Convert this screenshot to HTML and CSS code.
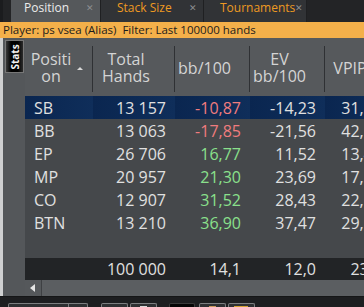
FILE: index.html
```html
<html>
	<head>
		<title>Position Stats</title>
		<link rel="stylesheet" href="styles.css">
	</head>
	<body>
		<div class="TabBar">
			<div class="Tab Active"><span class="TabLabel">Position</span><span class="TabClose">&#x2715;</span></div>
			<div class="Tab"><span class="TabLabel">Stack Size</span><span class="TabClose">&#x2715;</span></div>
			<div class="Tab"><span class="TabLabel">Tournaments</span><span class="TabClose">&#x2715;</span></div>
		</div>
		<div class="FilterBar">Player: ps vsea (Alias)&nbsp;&nbsp;Filter: Last 100000 hands</div>
		<div class="MainArea">
			<div class="SidePanel">
				<div class="SideTab"><span>Stats</span></div>
			</div>
			<div class="GridArea">
				<table class="StatGrid">
					<colgroup>
						<col class="ColPos">
						<col class="ColNum">
						<col class="ColStat">
						<col class="ColStat">
						<col class="ColLast">
					</colgroup>
					<thead>
						<tr>
							<th><div class="HeadCell"><div class="HeadText"><div>Positi</div><div>on</div></div><span class="SortArrow"></span></div></th>
							<th><div class="HeadCell"><div class="HeadText"><div>Total</div><div>Hands</div></div></div></th>
							<th><div class="HeadCell"><div class="HeadText"><div>bb/100</div></div></div></th>
							<th><div class="HeadCell"><div class="HeadText"><div>EV</div><div>bb/100</div></div></div></th>
							<th><div class="HeadCell Last"><div class="HeadText"><div>VPIP</div></div></div></th>
						</tr>
					</thead>
					<tbody>
						<tr class="Selected">
							<td class="PosCell">SB</td><td>13 157</td><td class="Neg">-10,87</td><td>-14,23</td><td>31,20</td>
						</tr>
						<tr>
							<td class="PosCell">BB</td><td>13 063</td><td class="Neg">-17,85</td><td>-21,56</td><td>42,10</td>
						</tr>
						<tr>
							<td class="PosCell">EP</td><td>26 706</td><td class="Pos">16,77</td><td>11,52</td><td>13,40</td>
						</tr>
						<tr>
							<td class="PosCell">MP</td><td>20 957</td><td class="Pos">21,30</td><td>23,69</td><td>17,30</td>
						</tr>
						<tr>
							<td class="PosCell">CO</td><td>12 907</td><td class="Pos">31,52</td><td>28,43</td><td>22,60</td>
						</tr>
						<tr>
							<td class="PosCell">BTN</td><td>13 210</td><td class="Pos">36,90</td><td>37,47</td><td>29,10</td>
						</tr>
						<tr class="Spacer">
							<td colspan=5></td>
						</tr>
						<tr class="Totals">
							<td></td><td>100 000</td><td>14,1</td><td>12,0</td><td>23,5</td>
						</tr>
					</tbody>
				</table>
				<div class="ScrollBar">
					<div class="ScrollButton"></div>
					<div class="ScrollTrack"></div>
				</div>
			</div>
		</div>
		<div class="ToolBar">
			<div class="ToolGroup Wide"><span class="ToolSplit"></span></div>
			<div class="ToolGroup Small"></div>
			<div class="ToolGroup Small"><span class="ToolIcon Light"></span></div>
			<div class="ToolGroup Black"></div>
			<div class="ToolGroup Small"><span class="ToolIcon Tan"></span></div>
			<div class="ToolGroup Small"><span class="ToolIcon Gold"></span></div>
		</div>
	</body>
</html>
```

FILE: styles.css
```css
/**************************************************************************/
/*
/* Default Formatting
/*
/**************************************************************************/

body {
	margin: 0;
	width: 364px;
	height: 307px;
	overflow: hidden;
	background-color: #2b2d2f;
	font-family: "Open Sans", "Noto Sans", sans-serif;
	font-size: 11.5px;
	color: #e2e2e2;
}

/**************************************************************************/
/*
/* Tabs and filter
/*
/**************************************************************************/

.TabBar {
	display: flex;
	height: 22px;
	padding-left: 8px;
	background-color: #232426;
	border-left: 3px solid #1b1c1e;
	box-sizing: border-box;
}

.Tab {
	display: flex;
	align-items: flex-start;
	width: 103px;
	padding: 0 0 0 16px;
	background-color: #313336;
	border-right: 1px solid #1f2022;
	box-sizing: border-box;
	color: #ee9a22;
	line-height: 15px;
}

.Tab.Active {
	width: 90px;
	background-color: #55585b;
	color: #ececec;
	padding-left: 13px;
}

.TabLabel {
	flex: 1;
	font-size: 12px;
}

.TabClose {
	width: 14px;
	font-size: 9px;
	color: #8c8e90;
}

.FilterBar {
	height: 16px;
	line-height: 16px;
	padding-left: 3px;
	background-color: #f4b04a;
	color: #1c1c1c;
	font-size: 11.5px;
	white-space: nowrap;
}

/**************************************************************************/
/*
/* Main area
/*
/**************************************************************************/

.MainArea {
	display: flex;
	height: 258px;
}

.SidePanel {
	width: 20px;
	border-left: 3px solid #cfd0d1;
	background-color: #54575a;
	padding: 2px 0 0 2px;
}

.SideTab {
	width: 19px;
	height: 33px;
	background: linear-gradient(to right, #3a3a3a, #000 30%, #000 70%, #2c2c2c);
	border: 1px solid #777;
	box-sizing: border-box;
	display: flex;
	align-items: center;
	justify-content: center;
}

.SideTab span {
	transform: rotate(-90deg);
	font-size: 10px;
	font-weight: bold;
	color: #f2f2f2;
}

.GridArea {
	width: 339px;
	overflow: hidden;
	background-color: #45484b;
}

/**************************************************************************/
/*
/* Stats grid
/*
/**************************************************************************/

table.StatGrid {
	border-collapse: collapse;
	table-layout: fixed;
	width: 366px;
}

col.ColPos { width: 68px; }
col.ColNum { width: 82px; }
col.ColStat { width: 75px; }
col.ColLast { width: 66px; }

th {
	height: 58px;
	padding: 0;
	background-color: #56595c;
	font-weight: normal;
	color: #d4d4d4;
	vertical-align: top;
}

.HeadCell {
	position: relative;
	height: 58px;
	padding-right: 16px;
	display: flex;
	align-items: center;
	justify-content: center;
}

.HeadCell::after {
	content: "";
	position: absolute;
	right: 0;
	top: 8px;
	height: 46px;
	border-right: 1px solid #2f3134;
}

.HeadCell.Last::after {
	display: none;
}

.HeadText {
	display: flex;
	flex-direction: column;
	gap: 1px;
	text-align: center;
	line-height: 16px;
	margin-top: 1px;
}

.SortArrow {
	position: absolute;
	right: 10px;
	top: 29px;
	border-left: 3px solid transparent;
	border-right: 3px solid transparent;
	border-bottom: 3px solid #d8d8d8;
}

td {
	height: 23px;
	padding: 0 9px 0 0;
	text-align: right;
	white-space: nowrap;
	overflow: hidden;
	color: #e0e0e0;
}

td.PosCell {
	text-align: left;
	padding-left: 9px;
}

td.Neg { color: #f07c7e; }
td.Pos { color: #8ae08c; }

tr.Selected td {
	background: linear-gradient(to right, #0a2650, #0f2e5a);
}

tr.Spacer td {
	height: 24px;
}

tr.Totals td {
	height: 21px;
	background-color: #222426;
}

/**************************************************************************/
/*
/* Scroll bar and toolbar
/*
/**************************************************************************/

.ScrollBar {
	display: flex;
	height: 16px;
	border-bottom: 1px solid #66696c;
}

.ScrollButton {
	width: 16px;
	background-color: #55585b;
	border-right: 1px solid #3e4043;
	position: relative;
}

.ScrollButton::after {
	content: "";
	position: absolute;
	left: 5px;
	top: 4px;
	border-top: 4px solid transparent;
	border-bottom: 4px solid transparent;
	border-right: 5px solid #e4e4e4;
}

.ScrollTrack {
	flex: 1;
	background-color: #5b5e61;
}

.ToolBar {
	display: flex;
	height: 11px;
	padding: 6px 0 0 8px;
	gap: 2px;
	background-color: #1d1e20;
	box-sizing: border-box;
	border-top: 1px solid #151617;
}

.ToolGroup {
	height: 8px;
	border: 1px solid #7c7e80;
	border-bottom: none;
	border-radius: 2px 2px 0 0;
	background-color: #2e3032;
	position: relative;
}

.ToolGroup.Wide { width: 78px; margin-right: 11px; }
.ToolGroup.Small { width: 25px; }
.ToolGroup.Black { width: 24px; margin: 0 2px 0 10px; background-color: #050505; border-color: #3a3a3a; }

.ToolSplit {
	position: absolute;
	left: 59px;
	top: 0;
	height: 8px;
	border-left: 1px solid #7c7e80;
}

.ToolIcon {
	position: absolute;
	left: 9px;
	top: 2px;
	width: 7px;
	height: 6px;
}

.ToolIcon.Light { background-color: #d9d9d9; }
.ToolIcon.Tan { background-color: #c99a5a; }
.ToolIcon.Gold { left: 5px; width: 14px; background-color: #d3a232; }
```
